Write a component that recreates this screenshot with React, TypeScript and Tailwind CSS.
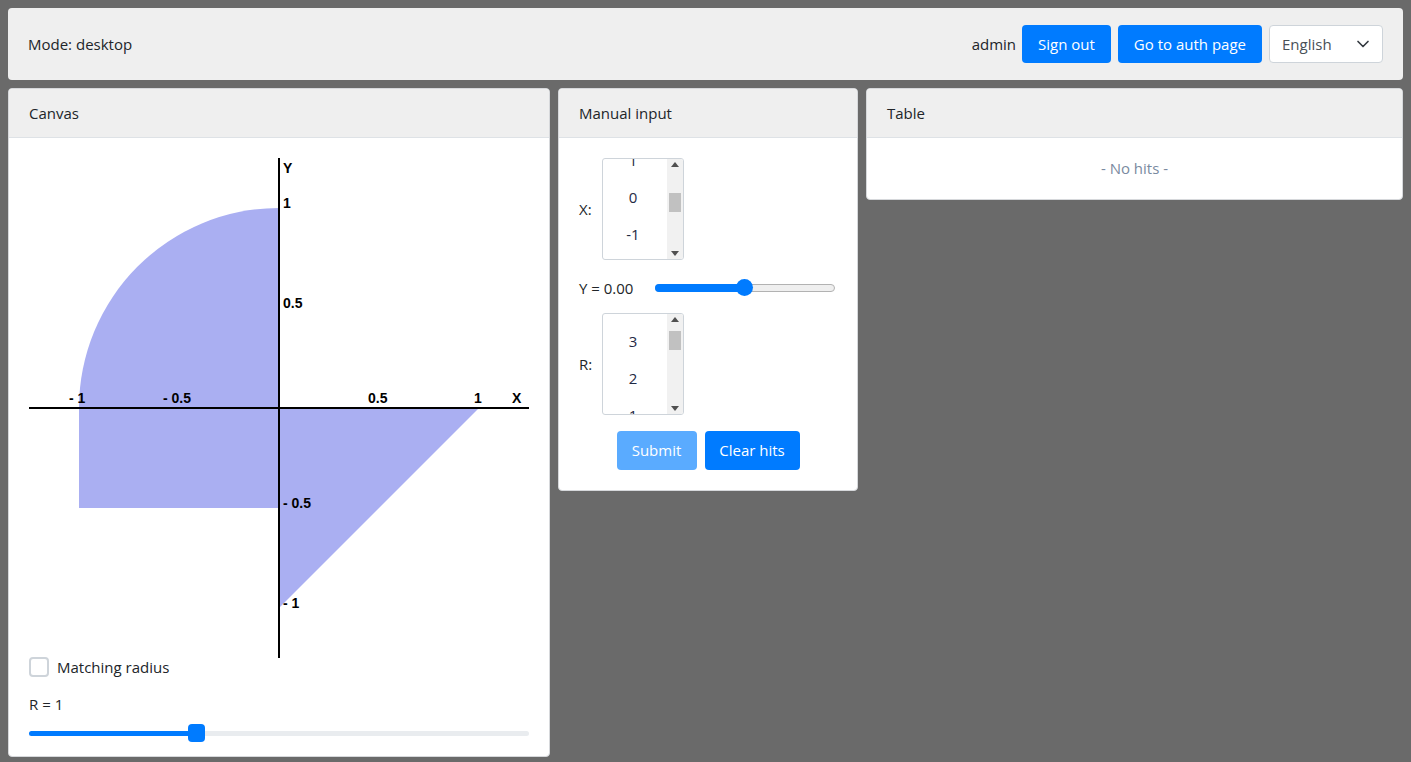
import { ChevronDown } from 'lucide-react'

const font = { fontFamily: '"Open Sans", "Noto Sans", sans-serif' }

function Card({ title, className, children }: { title: string; className?: string; children: React.ReactNode }) {
  return (
    <div className={`bg-white rounded-[4px] border border-[#d6d8db] overflow-hidden ${className ?? ''}`}>
      <div className="h-[49px] flex items-center px-5 bg-[#efefef] border-b border-[#dee2e6] text-[15px] text-[#212529]">
        {title}
      </div>
      {children}
    </div>
  )
}

function Chart() {
  const label = 'font-bold text-[14px]'
  return (
    <svg width={500} height={500} viewBox="0 0 500 500" style={{ fontFamily: '"Liberation Sans", Arial, sans-serif' }}>
      <path d="M250 250 L50 250 A200 200 0 0 1 250 50 Z" fill="#aaaff2" />
      <rect x={50} y={250} width={200} height={100} fill="#aaaff2" />
      <path d="M250 250 L450 250 L250 450 Z" fill="#aaaff2" />
      <line x1={0} y1={250} x2={500} y2={250} stroke="#000" strokeWidth={2} />
      <line x1={250} y1={0} x2={250} y2={500} stroke="#000" strokeWidth={2} />
      <g className={label}>
        <text x={254} y={15}>Y</text>
        <text x={254} y={50}>1</text>
        <text x={254} y={150}>0.5</text>
        <text x={254} y={350}>- 0.5</text>
        <text x={254} y={450}>- 1</text>
        <text x={40} y={245}>- 1</text>
        <text x={134} y={245}>- 0.5</text>
        <text x={339} y={245}>0.5</text>
        <text x={445} y={245}>1</text>
        <text x={483} y={245}>X</text>
      </g>
    </svg>
  )
}

function ListBox({ items, offset, thumbTop }: { items: string[]; offset: string; thumbTop: string }) {
  return (
    <div className="w-[82px] h-[102px] border border-[#ced4da] rounded-[3px] bg-white flex overflow-hidden">
      <div className="flex-1 overflow-hidden pr-[4px]">
        <div className={`flex flex-col ${offset}`}>
          {items.map((it) => (
            <div key={it} className="h-[37px] flex items-center justify-center text-[15px] text-[#1f2a44] shrink-0">
              {it}
            </div>
          ))}
        </div>
      </div>
      <div className="w-[16px] bg-[#f1f1f1] relative">
        <div className="absolute top-[3px] left-[4px] w-0 h-0 border-x-[4px] border-x-transparent border-b-[5px] border-b-[#505050]" />
        <div className={`absolute left-[2px] w-[12px] h-[19px] bg-[#c1c1c1] ${thumbTop}`} />
        <div className="absolute bottom-[3px] left-[4px] w-0 h-0 border-x-[4px] border-x-transparent border-t-[5px] border-t-[#505050]" />
      </div>
    </div>
  )
}

export default function App() {
  return (
    <div className="min-h-[762px] bg-[#6a6a6a] p-2 text-[#212529]" style={font}>
      <div className="h-[72px] bg-[#efefef] rounded-[4px] flex items-center px-5 text-[15px]">
        <span>Mode: desktop</span>
        <div className="ml-auto flex items-center">
          <span className="mr-[6px]">admin</span>
          <button className="h-[38px] px-[16px] rounded-[4px] bg-[#007bff] text-white text-[15px] mr-[7px]">Sign out</button>
          <button className="h-[38px] px-[16px] rounded-[4px] bg-[#007bff] text-white text-[15px] mr-[7px]">Go to auth page</button>
          <div className="h-[38px] w-[114px] bg-white border border-[#ced4da] rounded-[4px] flex items-center justify-between pl-3 pr-[9px] text-[#495057]">
            <span>English</span>
            <ChevronDown size={20} strokeWidth={2} className="text-[#343a40]" />
          </div>
        </div>
      </div>

      <div className="flex items-start gap-2 mt-2">
        <Card title="Canvas" className="w-[542px] h-[669px]">
          <div className="px-5 pt-5">
            <Chart />
            <label className="flex items-center gap-2 -mt-[1px] h-[20px] text-[15px]">
              <span className="w-[20px] h-[20px] border-2 border-[#ced4da] rounded-[4px] bg-white" />
              Matching radius
            </label>
            <div className="mt-[16px] text-[15px]">R = 1</div>
            <div className="relative h-[18px] mt-[8px]">
              <div className="absolute left-0 right-0 top-[7px] h-[5px] rounded bg-[#e9ecef]" />
              <div className="absolute left-0 w-[167px] top-[7px] h-[5px] rounded-l bg-[#007bff]" />
              <div className="absolute left-[159px] top-0 w-[17px] h-[18px] rounded-[4px] bg-[#007bff]" />
            </div>
          </div>
        </Card>

        <Card title="Manual input" className="w-[300px]">
          <div className="px-5 pt-5 pb-5">
            <div className="flex items-center gap-[9px]">
              <span className="text-[15px] w-[14px]">X:</span>
              <ListBox items={['1', '0', '-1', '-2', '-3']} offset="-mt-[17px]" thumbTop="top-[34px]" />
            </div>
            <div className="flex items-center mt-[16px] h-[24px]">
              <span className="text-[15px]">Y = 0.00</span>
              <div className="relative ml-[22px] w-[180px] h-[18px]">
                <div className="absolute left-0 right-0 top-[5px] h-[8px] rounded-full bg-[#efefef] border border-[#b2b2b2]" />
                <div className="absolute left-0 w-[92px] top-[5px] h-[8px] rounded-full bg-[#007bff]" />
                <div className="absolute left-[81px] top-0 w-[17px] h-[17px] rounded-full bg-[#007bff]" />
              </div>
            </div>
            <div className="flex items-center gap-[9px] mt-[13px]">
              <span className="text-[15px] w-[14px]">R:</span>
              <ListBox items={['3', '2', '1']} offset="mt-[9px]" thumbTop="top-[17px]" />
            </div>
            <div className="flex justify-center gap-[8px] mt-[16px]">
              <button className="h-[39px] w-[80px] rounded-[4px] bg-[#5aabff] text-white text-[15px]">Submit</button>
              <button className="h-[39px] w-[95px] rounded-[4px] bg-[#007bff] text-white text-[15px]">Clear hits</button>
            </div>
          </div>
        </Card>

        <Card title="Table" className="flex-1">
          <div className="h-[61px] flex items-center justify-center text-[15px] text-[#7a8aa0]">- No hits -</div>
        </Card>
      </div>
    </div>
  )
}
